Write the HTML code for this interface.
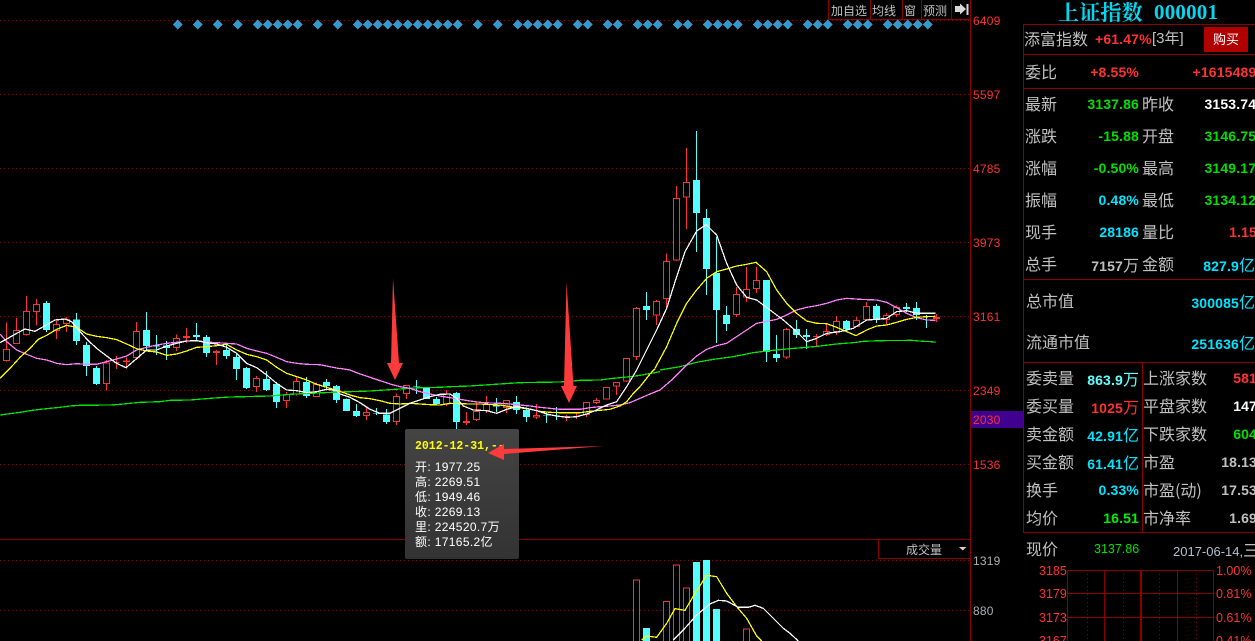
<!DOCTYPE html>
<html><head><meta charset="utf-8">
<style>
html,body{margin:0;padding:0;background:#000;width:1255px;height:641px;overflow:hidden}
#p{position:relative;width:1255px;height:641px;overflow:hidden;background:#000;font-family:"Liberation Sans","WenQuanYi Zen Hei","Noto Sans CJK SC",sans-serif}
svg{position:absolute;left:0;top:0}
.t{position:absolute;white-space:nowrap;height:20px;line-height:20px}
.l{font-size:16px;color:#c0c0c0;font-family:"WenQuanYi Zen Hei","Noto Sans CJK SC",sans-serif;font-weight:normal;margin-top:-1px}
.v{font-size:14px;font-weight:bold;letter-spacing:.15px;font-family:"Liberation Sans","WenQuanYi Zen Hei",sans-serif}
.v i{font-style:normal;font-weight:normal;font-size:16px;letter-spacing:0;font-family:"WenQuanYi Zen Hei","Noto Sans CJK SC",sans-serif}
.r1{right:116px}.r2{right:-2px}
.g{color:#00e000}.c{color:#00e4ff}.r{color:#ff3232}.w{color:#fff}.y{color:#c0c0c0}
.ax{font-size:12px;letter-spacing:.2px;left:973px;color:#ff3232}
.tb{font-size:12px;color:#c0c0c0;top:0;margin-top:1px;font-family:"WenQuanYi Zen Hei","Noto Sans CJK SC",sans-serif}
.m{font-size:12.5px;color:#ff3232}
#tip{position:absolute;left:405px;top:429px;width:114px;height:130px;border-radius:2px;background:linear-gradient(#444,#333)}
#tip div{position:absolute;left:10px;font-size:12px;line-height:15px;height:15px;color:#fff;white-space:nowrap;font-family:"Liberation Sans","WenQuanYi Zen Hei",sans-serif;letter-spacing:.35px}
.ln path{stroke-width:3.8}
</style></head><body><div id="p">
<svg width="1255" height="641" viewBox="0 0 1255 641" fill="none">
<defs><path id="d" d="M-.5 24.5l5-5 5 5-5 5z" fill="#3399cc" shape-rendering="crispEdges"/></defs>
<g stroke="#900000" stroke-dasharray="1 3" shape-rendering="crispEdges">
<path d="M0 20.5H970M0 94.5H970M0 168.5H970M0 242.5H970M0 316.5H970M0 390.5H970M0 464.5H970M0 560.5H970M0 610.5H970"/>
</g>
<g stroke="#8a0000" shape-rendering="crispEdges">
<path d="M0 539.5H970M970.5 0V641M1023.5 24V532M828.5 0V19.5M870.5 0V19.5M902.5 0V19.5M921.5 0V19.5M951.5 0V19.5M828 19.5H970M878.5 539V558.5H970"/>
<path d="M1023 24.5H1255M1023 54.5H1255M1023 88.5H1255M1023 279.5H1255M1023 362.5H1255M1023 532.5H1255M1142.5 362V532"/>
<path d="M1067.5 570V641M1213.5 570V641M1104.5 570V641M1140.5 570V641M1141.5 570V641M1177.5 570V641M1067 570.5H1214M1067 593.5H1214M1067 617.5H1214"/>
<path stroke-dasharray="1 3" d="M1087.5 570V641M1123.5 570V641M1159.5 570V641M1196.5 570V641"/>
</g>
<path d="M959 549h7.500l-3.750 3.500z" fill="#d0d0d0" transform="translate(0,-2)"/>
<use href="#d" x="173"/><use href="#d" x="193"/><use href="#d" x="213"/><use href="#d" x="233"/><use href="#d" x="253"/><use href="#d" x="263"/><use href="#d" x="273"/><use href="#d" x="283"/><use href="#d" x="293"/><use href="#d" x="313"/><use href="#d" x="333"/><use href="#d" x="353"/><use href="#d" x="363"/><use href="#d" x="373"/><use href="#d" x="383"/><use href="#d" x="393"/><use href="#d" x="403"/><use href="#d" x="413"/><use href="#d" x="423"/><use href="#d" x="433"/><use href="#d" x="443"/><use href="#d" x="453"/><use href="#d" x="473"/><use href="#d" x="493"/><use href="#d" x="513"/><use href="#d" x="523"/><use href="#d" x="533"/><use href="#d" x="543"/><use href="#d" x="553"/><use href="#d" x="573"/><use href="#d" x="583"/><use href="#d" x="603"/><use href="#d" x="613"/><use href="#d" x="633"/><use href="#d" x="643"/><use href="#d" x="653"/><use href="#d" x="673"/><use href="#d" x="683"/><use href="#d" x="703"/><use href="#d" x="713"/><use href="#d" x="723"/><use href="#d" x="733"/><use href="#d" x="753"/><use href="#d" x="763"/><use href="#d" x="773"/><use href="#d" x="783"/><use href="#d" x="803"/><use href="#d" x="813"/><use href="#d" x="823"/><use href="#d" x="843"/><use href="#d" x="853"/><use href="#d" x="863"/><use href="#d" x="883"/><use href="#d" x="893"/><use href="#d" x="903"/><use href="#d" x="913"/><use href="#d" x="923"/>

<g shape-rendering="crispEdges" stroke-width="3">
<!-- zone 1 -->
<g transform="translate(0,270) scale(.33333)">
<path stroke="#ff3232" d="M19.500 158V275M49.500 144V221M79.500 78V197M109.500 87V167M169.500 153V207M199.500 141V186M319.500 270V362M349.500 258V297M379.500 262V295M409.500 156V263M529.500 193V243M559.500 174V219M649.500 240V285M769.500 318V366M859.500 366V414M889.500 321V377M949.500 337V380"/>
<path stroke="#ff3232" fill="#000" d="M10.500 238h18V271h-18zM40.500 182h18V220h-18zM70.500 125h18V193h-18zM100.500 104h18V124h-18zM160.500 164h18V182h-18zM190.500 149h18V160h-18zM310.500 279h18V340h-18zM340.500 278h18V278h-18zM370.500 273h18V274h-18zM400.500 185h18V262h-18zM520.500 206h18V232h-18zM550.500 200h18V203h-18zM640.500 245h18V247h-18zM760.500 326h18V350h-18zM850.500 374h18V391h-18zM880.500 335h18V372h-18zM940.500 344h18V379h-18z"/>
<path stroke="#54ffff" d="M139.500 93V186M229.500 129V225M259.500 216V318M289.500 288V345M439.500 126V240M469.500 195V255M499.500 213V270M589.500 159V213M619.500 195V261M679.500 225V267M709.500 252V330M739.500 291V357M799.500 303V363M829.500 336V414M919.500 321V384M979.500 327V362M1009.500 345V399"/>
<path fill="#54ffff" stroke="none" d="M129 99h21V180h-21zM219 148h21V213h-21zM249 225h21V288h-21zM279 294h21V342h-21zM429 180h21V228h-21zM459 227h21V230h-21zM489 226h21V234h-21zM579 195h21V201h-21zM609 201h21V249h-21zM669 240h21V258h-21zM699 261h21V297h-21zM729 294h21V354h-21zM789 327h21V360h-21zM819 342h21V396h-21zM909 336h21V378h-21zM969 336h21V348h-21zM999 348h21V390h-21z"/>
</g>
<!-- zone 2 -->
<g transform="translate(340,270) scale(.33333)">
<path stroke="#ff3232" d="M79.500 411V450M169.500 370V465M199.500 345V387M319.500 360V408M379.500 426V465M409.500 396V453M439.500 378V429M499.500 390V429M589.500 402V447M679.500 435V453M709.500 429V447M739.500 396V441M769.500 384V402M799.500 351V388M829.500 336V375M859.500 264V336M889.500 111V270M949.500 90V165"/>
<path stroke="#ff3232" fill="#000" d="M70.500 428h18V436h-18zM160.500 380h18V454h-18zM190.500 347h18V370h-18zM310.500 372h18V402h-18zM370.500 455h18V457h-18zM400.500 424h18V448h-18zM430.500 404h18V422h-18zM490.500 392h18V412h-18zM580.500 436h18V441h-18zM670.500 439h18V439h-18zM700.500 439h18V440h-18zM730.500 398h18V434h-18zM760.500 392h18V397h-18zM790.500 353h18V387h-18zM820.500 338h18V348h-18zM850.500 266h18V333h-18zM880.500 116h18V259h-18zM940.500 95h18V135h-18z"/>
<path stroke="#54ffff" d="M19.500 385V423M49.500 402V441M109.500 414V435M139.500 417V462M229.500 330V372M259.500 352V387M289.500 381V405M349.500 366V477M469.500 384V426M529.500 378V432M559.500 414V456M619.500 426V459M649.500 411V450M919.500 66V150"/>
<path fill="#54ffff" stroke="none" d="M9 387h21V423h-21zM39 423h21V438h-21zM99 430h21V432h-21zM129 433h21V456h-21zM219 349h21V351h-21zM249 354h21V387h-21zM279 387h21V402h-21zM339 369h21V456h-21zM459 404h21V410h-21zM519 396h21V420h-21zM549 420h21V441h-21zM609 435h21V437h-21zM639 436h21V438h-21zM909 108h21V120h-21z"/>
</g>
<!-- zone 3 -->
<g transform="translate(620,120) scale(.33333)">
<path stroke="#ff3232" d="M139.500 400V570M169.500 198V423M199.500 84V327M349.500 501V591M379.500 441V546M409.500 441V519M499.500 624V717M589.500 642V678M619.500 612V648M649.500 588V645M709.500 591V620M739.500 546V603M799.500 579V615M829.500 557V591M949.500 582V606"/>
<path stroke="#ff3232" fill="#000" d="M130.500 425h18V535h-18zM160.500 236h18V420h-18zM190.500 188h18V231h-18zM340.500 523h18V583h-18zM370.500 509h18V531h-18zM400.500 482h18V505h-18zM490.500 629h18V711h-18zM580.500 649h18V650h-18zM610.500 634h18V644h-18zM640.500 604h18V634h-18zM700.500 601h18V619h-18zM730.500 559h18V599h-18zM790.500 587h18V598h-18zM820.500 562h18V584h-18zM940.500 593h18V595h-18z"/>
<path stroke="#54ffff" d="M229.500 33V396M259.500 267V525M289.500 351V669M319.500 558V633M439.500 480V726M469.500 645V726M529.500 600V654M559.500 627V687M679.500 600V636M769.500 552V609M859.500 549V576M889.500 546V600M919.500 585V624"/>
<path fill="#54ffff" stroke="none" d="M219 180h21V279h-21zM249 294h21V447h-21zM279 459h21V570h-21zM309 585h21V612h-21zM429 480h21V696h-21zM459 702h21V714h-21zM519 627h21V645h-21zM549 645h21V651h-21zM669 603h21V627h-21zM759 558h21V600h-21zM849 561h21V567h-21zM879 564h21V585h-21zM909 588h21V590h-21z"/>
</g>
<!-- volume -->
<g transform="translate(620,530) scale(.33333)">
<path stroke="#ff3232" fill="#000" d="M40.500 149.500h18V340h-18zM130.500 214.500h18V340h-18zM160.500 104.500h18V340h-18zM190.500 173.500h18V340h-18zM370.500 296.500h18V340h-18z"/>
<path fill="#54ffff" stroke="none" d="M69 294h21V340h-21zM219 96h21V340h-21zM249 90h21V340h-21zM279 237h21V340h-21z"/>
<g class="ln">
<path stroke="#ffff00" d="M65 330L80 318 110 322 140 280 165 236 195 241 225 190 260 136 290 140 320 190 350 230 380 265 410 318 425 333"/>
<path stroke="#fff" d="M160 330L190 300 230 255 270 222 295 211 320 213 355 232 385 232 405 226 430 235 460 265 490 295 510 310 535 333"/>
</g>
</g>
<!-- lines -->
<g class="ln" transform="translate(0,270) scale(.33333)">
<path stroke="#00e600" d="M0 435L30 431 60 427 90 422 120 418 150 415 180 412 210 408 240 406 330 405 360 403 390 400 420 397 480 395 510 391 570 390 630 385 690 381 810 378 870 373 930 370 1020 366"/>
<path stroke="#ff80ff" d="M0 192L20 215 50 240 80 253 110 265 140 270 170 280 200 284 230 281 260 283 290 283 320 275 350 267 380 258 410 240 440 232 470 225 500 220 530 217 560 213 590 212 620 216 650 218 680 220 710 222 740 235 770 243 800 250 830 262 860 275 890 280 920 283 960 284 990 290 1020 296"/>
<path stroke="#ffff00" d="M0 325L30 295 60 262 90 235 115 208 140 196 170 178 200 166 230 172 260 192 290 199 320 203 350 209 380 222 410 236 440 243 470 246 500 256 530 252 560 243 590 232 620 230 650 227 680 223 710 240 740 253 770 260 800 270 830 292 860 310 890 320 920 330 950 343 980 352 1020 364"/>
<path stroke="#fff" d="M0 218L20 207 50 190 75 177 105 184 130 170 165 150 195 147 215 155 240 185 265 212 290 235 320 258 350 280 378 293 405 270 440 240 470 240 500 228 530 220 560 213 590 212 620 218 650 222 680 232 710 250 740 280 770 293 800 315 830 340 860 360 890 362 920 368 950 365 980 358 1010 362 1020 372"/>
</g>
<g class="ln" transform="translate(340,270) scale(.33333)">
<path stroke="#00e600" d="M0 366L30 365 90 363 150 359 210 355 240 353 300 352 330 350 390 348 450 344 480 342 540 338 660 336 690 334 720 331 780 330 810 326 870 320 900 316 960 305"/>
<path stroke="#ff80ff" d="M0 295L30 300 60 312 90 322 120 332 150 342 180 350 210 355 240 365 270 372 300 378 330 383 360 388 390 393 420 397 450 399 480 400 510 402 540 405 570 408 600 412 630 415 660 418 720 418 750 413 780 410 810 408 840 405 870 398 900 385 930 372 960 360"/>
<path stroke="#ffff00" d="M0 364L30 375 60 383 90 386 120 392 150 400 180 402 210 400 240 402 270 404 300 405 330 400 390 402 420 402 480 405 510 410 540 413 570 418 600 424 630 427 660 428 720 428 750 424 780 421 810 418 840 408 860 395 880 370 900 350 930 312 945 296"/>
<path stroke="#fff" d="M0 372L30 382 60 398 90 418 120 430 150 430 180 415 210 400 240 390 270 380 300 373 330 372 350 385 370 408 400 420 440 422 470 430 500 418 530 410 560 415 590 422 620 432 650 438 680 442 710 440 740 432 770 420 800 405 830 395 860 350 890 300 920 240 950 180"/>
</g>
<g class="ln" transform="translate(620,120) scale(.33333)">
<path stroke="#00e600" d="M120 750L180 740 230 727 280 718 340 710 400 698 450 692 510 686 560 682 600 678 650 672 700 668 730 664 780 662 875 661 910 664 935 665 947 667"/>
<path stroke="#ff80ff" d="M120 810L155 780 200 735 230 708 260 688 290 677 320 670 350 650 380 630 410 610 440 604 470 598 500 585 530 570 560 562 590 557 620 550 650 540 680 535 720 538 770 540 800 547 830 563 860 580 890 593 920 600 947 601"/>
<path stroke="#ffff00" d="M105 745L140 680 170 610 200 550 228 512 260 475 290 455 320 447 350 438 380 433 408 427 440 455 470 510 500 550 530 580 560 603 590 610 620 611 650 622 680 635 708 647 740 630 770 618 800 615 830 607 860 598 890 592 920 590 947 589"/>
<path stroke="#fff" d="M110 630L140 565 170 470 195 395 230 333 258 314 290 345 320 430 350 495 380 532 410 540 450 570 490 600 530 635 560 665 590 655 620 640 660 635 700 625 740 600 770 598 800 595 830 575 860 572 890 580 947 580"/>
</g>
</g>
<rect x="971" y="411" width="52" height="17" fill="#400090"/>
<path d="M955 6h5V3.500l6 5.500-6 5.500V12h-5z" fill="#d8d8d8"/>
<rect x="966.500" y="4" width="2" height="11" fill="#d8d8d8"/>
<rect x="1204" y="27" width="44" height="25" fill="#b00000"/>
</svg>

<span class="t tb" style="left:831px">加自选</span>
<span class="t tb" style="left:872px">均线</span>
<span class="t tb" style="left:904px">窗</span>
<span class="t tb" style="left:923px">预测</span>

<span class="t ax" style="top:11px">6409</span>
<span class="t ax" style="top:85px">5597</span>
<span class="t ax" style="top:159px">4785</span>
<span class="t ax" style="top:233px">3973</span>
<span class="t ax" style="top:307px">3161</span>
<span class="t ax" style="top:381px">2349</span>
<span class="t ax" style="top:410px">2030</span>
<span class="t ax" style="top:455px">1536</span>
<span class="t ax" style="top:551px;color:#a8b0b0">1319</span>
<span class="t ax" style="top:601px;color:#a8b0b0">880</span>
<span class="t tb" style="left:906px;top:539px">成交量</span>

<div id="tip">
<div style="top:10px;font:bold 11.500px/15px 'Liberation Mono',monospace;color:#ffff00;letter-spacing:0">2012-12-31,--</div>
<div style="top:31px">开: 1977.25</div>
<div style="top:46px">高: 2269.51</div>
<div style="top:61px">低: 1949.46</div>
<div style="top:76px">收: 2269.13</div>
<div style="top:91px">里: 224520.7万</div>
<div style="top:106px">额: 17165.2亿</div>
</div>

<svg width="1255" height="641" viewBox="0 0 1255 641" style="pointer-events:none">
<g fill="#ff3a3a">
<path d="M393 278L399 363H403L395 380 387 363H391Z"/>
<path d="M566.500 282L573.500 386H577L569 403 561 386H564Z"/>
<path d="M488 453L504 444V449L604 446 504 454V460Z"/>
</g>
</svg>

<span class="t" style="left:1058px;top:1px;height:22px;line-height:22px;font:bold 21px/22px 'Noto Serif CJK SC','Liberation Serif',serif;color:#00d8f0;letter-spacing:.2px">上证指数</span>
<span class="t" style="left:1154px;top:1px;height:22px;font:bold 21px/22px 'Liberation Serif',serif;color:#00d8f0;letter-spacing:.2px">000001</span>

<span class="t l" style="left:1024px;top:29px">添富指数</span>
<span class="t v r" style="left:1095px;top:29px">+61.47%</span>
<span class="t y" style="left:1152px;top:29px;font-size:15px">[3年]</span>
<span class="t" style="left:1204px;top:29px;width:44px;text-align:center;color:#fff;font-size:13px;font-family:'WenQuanYi Zen Hei','Noto Sans CJK SC',sans-serif">购买</span>

<span class="t l" style="left:1025px;top:62px">委比</span>
<span class="t v r r1" style="top:62px">+8.55%</span>
<span class="t v r" style="left:1192.500px;top:62px">+1615489</span>

<span class="t l" style="left:1025px;top:94px">最新</span><span class="t v g r1" style="top:94px">3137.86</span><span class="t l" style="left:1142px;top:94px">昨收</span><span class="t v w" style="left:1204.500px;top:94px">3153.74</span>
<span class="t l" style="left:1025px;top:126px">涨跌</span><span class="t v g r1" style="top:126px">-15.88</span><span class="t l" style="left:1142px;top:126px">开盘</span><span class="t v g" style="left:1204.500px;top:126px">3146.75</span>
<span class="t l" style="left:1025px;top:158px">涨幅</span><span class="t v g r1" style="top:158px">-0.50%</span><span class="t l" style="left:1142px;top:158px">最高</span><span class="t v g" style="left:1204.500px;top:158px">3149.17</span>
<span class="t l" style="left:1025px;top:190px">振幅</span><span class="t v c r1" style="top:190px">0.48%</span><span class="t l" style="left:1142px;top:190px">最低</span><span class="t v g" style="left:1204.500px;top:190px">3134.12</span>
<span class="t l" style="left:1025px;top:222px">现手</span><span class="t v c r1" style="top:222px">28186</span><span class="t l" style="left:1142px;top:222px">量比</span><span class="t v r r2" style="top:222px">1.15</span>
<span class="t l" style="left:1025px;top:254px">总手</span><span class="t v y r1" style="top:254px">7157<i>万</i></span><span class="t l" style="left:1142px;top:254px">金额</span><span class="t v c" style="right:0;top:254px">827.9<i>亿</i></span>

<span class="t l" style="left:1026px;top:291px">总市值</span><span class="t v c" style="right:0;top:291px">300085<i>亿</i></span>
<span class="t l" style="left:1026px;top:332px">流通市值</span><span class="t v c" style="right:0;top:332px">251636<i>亿</i></span>

<span class="t l" style="left:1026px;top:368px">委卖量</span><span class="t v r1" style="top:368px;color:#60ffff">863.9<i>万</i></span><span class="t l" style="left:1143px;top:368px">上涨家数</span><span class="t v r r2" style="top:368px">581</span>
<span class="t l" style="left:1026px;top:396px">委买量</span><span class="t v r r1" style="top:396px">1025<i>万</i></span><span class="t l" style="left:1143px;top:396px">平盘家数</span><span class="t v w r2" style="top:396px">147</span>
<span class="t l" style="left:1026px;top:424px">卖金额</span><span class="t v c r1" style="top:424px">42.91<i>亿</i></span><span class="t l" style="left:1143px;top:424px">下跌家数</span><span class="t v g r2" style="top:424px">604</span>
<span class="t l" style="left:1026px;top:452px">买金额</span><span class="t v c r1" style="top:452px">61.41<i>亿</i></span><span class="t l" style="left:1143px;top:452px">市盈</span><span class="t v y r2" style="top:452px">18.13</span>
<span class="t l" style="left:1026px;top:480px">换手</span><span class="t v c r1" style="top:480px">0.33%</span><span class="t l" style="left:1143px;top:480px">市盈(动)</span><span class="t v y r2" style="top:480px">17.53</span>
<span class="t l" style="left:1026px;top:508px">均价</span><span class="t v r1" style="top:508px;color:#00f000">16.51</span><span class="t l" style="left:1143px;top:508px">市净率</span><span class="t v y r2" style="top:508px">1.69</span>

<span class="t l" style="left:1026px;top:539px">现价</span>
<span class="t g" style="left:1094px;top:539px;font-size:12.500px">3137.86</span>
<span class="t" style="left:1173px;top:539px;font-size:13px;color:#b0c0d0">2017-06-14,<span style="font-family:'WenQuanYi Zen Hei','Noto Sans CJK SC',sans-serif;font-size:16px;color:#c0c0c0">三</span></span>

<span class="t m" style="left:1039px;top:561px">3185</span><span class="t m" style="left:1216px;top:561px">1.00%</span>
<span class="t m" style="left:1039px;top:584px">3179</span><span class="t m" style="left:1216px;top:584px">0.81%</span>
<span class="t m" style="left:1039px;top:608px">3173</span><span class="t m" style="left:1216px;top:608px">0.61%</span>
<span class="t m" style="left:1039px;top:631px">3167</span><span class="t m" style="left:1216px;top:631px">0.41%</span>
</div></body></html>
